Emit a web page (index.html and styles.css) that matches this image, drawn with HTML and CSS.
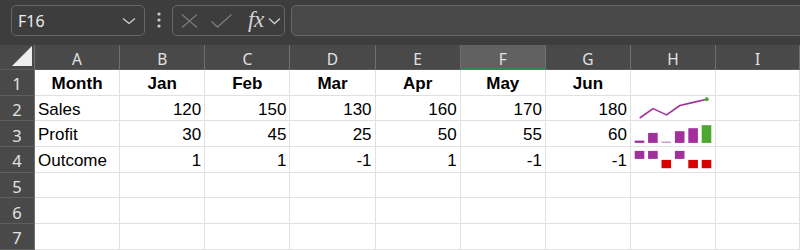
FILE: index.html
```html
<!DOCTYPE html>
<html lang="en">
<head>
  <meta charset="UTF-8" />
  <title>Sparklines</title>
  <link rel="stylesheet" href="styles.css">
</head>
<body>

  <!-- formula bar -->
  <div class="toolbar">
    <div class="namebox">
      <span>F16</span>
      <svg width="14" height="8" viewBox="0 0 14 8"><path d="M1 1.5 L7 6.5 L13 1.5" /></svg>
    </div>
    <div class="dots">
      <svg width="4" height="16" viewBox="0 0 4 16"><circle cx="2" cy="2" r="1.6"/><circle cx="2" cy="8" r="1.6"/><circle cx="2" cy="14" r="1.6"/></svg>
    </div>
    <div class="fnbox">
      <svg class="x-icon" width="17" height="14" viewBox="0 0 17 14"><path d="M1 0.5 L16 13.5 M16 0.5 L1 13.5" /></svg>
      <svg class="ok-icon" width="21" height="14" viewBox="0 0 21 14"><path d="M0.5 7.5 L6.5 13 L20.5 0.5" /></svg>
      <span class="fx">fx</span>
      <svg class="fx-arrow" width="13" height="8" viewBox="0 0 13 8"><path d="M1 1.5 L6.5 6.5 L12 1.5" /></svg>
    </div>
    <div class="formula"></div>
  </div>

  <!-- grid -->
  <div class="sheet">
    <div class="corner"><span class="tri"></span></div>
    <div class="hd">A</div>
    <div class="hd">B</div>
    <div class="hd">C</div>
    <div class="hd">D</div>
    <div class="hd">E</div>
    <div class="hd sel">F</div>
    <div class="hd">G</div>
    <div class="hd">H</div>
    <div class="hd">I</div>

    <div class="rh">1</div>
    <div class="c b">Month</div>
    <div class="c b">Jan</div>
    <div class="c b">Feb</div>
    <div class="c b">Mar</div>
    <div class="c b">Apr</div>
    <div class="c b">May</div>
    <div class="c b">Jun</div>
    <div class="c"></div>
    <div class="c"></div>

    <div class="rh">2</div>
    <div class="c">Sales</div>
    <div class="c num">120</div>
    <div class="c num">150</div>
    <div class="c num">130</div>
    <div class="c num">160</div>
    <div class="c num">170</div>
    <div class="c num">180</div>
    <div class="c spark">
      <svg width="85" height="25" viewBox="0 0 85 25">
        <polyline class="line" points="8.7,22 22.1,12.6 35.5,18.9 48.9,9.5 62.3,6.4 75.7,3.3" />
        <circle class="hi" cx="75.7" cy="3.3" r="2" />
      </svg>
    </div>
    <div class="c"></div>

    <div class="rh">3</div>
    <div class="c">Profit</div>
    <div class="c num">30</div>
    <div class="c num">45</div>
    <div class="c num">25</div>
    <div class="c num">50</div>
    <div class="c num">55</div>
    <div class="c num">60</div>
    <div class="c spark">
      <svg width="85" height="25" viewBox="0 0 85 25">
        <rect class="bar" x="3.7" y="19.6" width="9.6" height="2.3" />
        <rect class="bar" x="17.1" y="11.9" width="9.6" height="10" />
        <rect class="bar low" x="30.5" y="20.6" width="9.6" height="1.3" />
        <rect class="bar" x="43.9" y="10.2" width="9.6" height="11.7" />
        <rect class="bar" x="57.3" y="7.2" width="9.6" height="14.7" />
        <rect class="bar high" x="70.7" y="4.2" width="9.6" height="17.7" />
      </svg>
    </div>
    <div class="c"></div>

    <div class="rh">4</div>
    <div class="c">Outcome</div>
    <div class="c num">1</div>
    <div class="c num">1</div>
    <div class="c num">-1</div>
    <div class="c num">1</div>
    <div class="c num">-1</div>
    <div class="c num">-1</div>
    <div class="c spark">
      <svg width="85" height="25" viewBox="0 0 85 25">
        <rect class="bar" x="3.7" y="3.9" width="9.6" height="8" />
        <rect class="bar" x="17.1" y="3.9" width="9.6" height="8" />
        <rect class="bar loss" x="30.5" y="12.9" width="9.6" height="8.3" />
        <rect class="bar" x="43.9" y="3.9" width="9.6" height="8" />
        <rect class="bar loss" x="57.3" y="12.9" width="9.6" height="8.3" />
        <rect class="bar loss" x="70.7" y="12.9" width="9.6" height="8.3" />
      </svg>
    </div>
    <div class="c"></div>

    <div class="rh">5</div>
    <div class="c"></div><div class="c"></div><div class="c"></div><div class="c"></div><div class="c"></div>
    <div class="c"></div><div class="c"></div><div class="c"></div><div class="c"></div>

    <div class="rh">6</div>
    <div class="c"></div><div class="c"></div><div class="c"></div><div class="c"></div><div class="c"></div>
    <div class="c"></div><div class="c"></div><div class="c"></div><div class="c"></div>

    <div class="rh">7</div>
    <div class="c"></div><div class="c"></div><div class="c"></div><div class="c"></div><div class="c"></div>
    <div class="c"></div><div class="c"></div><div class="c"></div><div class="c"></div>
  </div>

</body>
</html>
```

FILE: styles.css
```css
body {
  margin: 0;
  background-color: #ffffff;
  font-family: "Liberation Sans", Arial, sans-serif;
  overflow: hidden;
}

/* formula bar */
.toolbar {
  display: flex;
  align-items: flex-start;
  height: 45px;
  padding: 5px 0 0 11px;
  box-sizing: border-box;
  background-color: #3d3d3d;
  overflow: hidden;
}

.namebox {
  display: flex;
  align-items: center;
  justify-content: space-between;
  width: 134px;
  height: 31px;
  padding: 0 8px 0 6px;
  box-sizing: border-box;
  border: 1px solid #676767;
  border-radius: 5px;
  color: #ececec;
  font-family: "Noto Sans", sans-serif;
  font-size: 16px;
}

.namebox svg path,
.fx-arrow path {
  fill: none;
  stroke: #cfcfcf;
  stroke-width: 1.3;
}

.dots {
  display: flex;
  justify-content: center;
  width: 27px;
  padding-top: 7px;
}

.dots circle {
  fill: #cfcfcf;
}

.fnbox {
  display: flex;
  align-items: center;
  width: 113px;
  height: 31px;
  padding-left: 8px;
  box-sizing: border-box;
  border: 1px solid #676767;
  border-radius: 5px;
}

.x-icon path,
.ok-icon path {
  fill: none;
  stroke: #7b7b7b;
  stroke-width: 1.3;
}

.ok-icon {
  margin-left: 13px;
}

.fx {
  margin-left: 16px;
  margin-top: -3px;
  color: #d4d4d4;
  font-family: "Liberation Serif", serif;
  font-style: italic;
  font-size: 23px;
  line-height: 1;
  letter-spacing: -0.5px;
}

.fx-arrow {
  margin-left: 4px;
}

.formula {
  flex: 1;
  height: 31px;
  margin-left: 6px;
  margin-right: -10px;
  box-sizing: border-box;
  border: 1px solid #676767;
  border-radius: 5px;
  background-color: #484848;
}

/* grid */
.sheet {
  display: grid;
  grid-template-columns: 35px repeat(8, 85.15px) 1fr;
  grid-template-rows: 25px repeat(7, 25.7px);
}

.corner,
.hd,
.rh {
  background-color: #494949;
  color: #e2e2e2;
  font-family: "Noto Sans", sans-serif;
  box-sizing: border-box;
}

.corner {
  display: flex;
  align-items: flex-end;
  justify-content: flex-end;
  padding: 0 2px 3px 0;
  border-right: 1px solid #6f6f6f;
  border-bottom: 1px solid #5a5a5a;
}

.tri {
  width: 0;
  height: 0;
  border-left: 20px solid transparent;
  border-bottom: 20px solid #ededed;
}

.hd {
  display: flex;
  justify-content: center;
  align-items: center;
  padding-top: 4px;
  font-size: 15.5px;
  border-right: 1px solid #6f6f6f;
  border-bottom: 1px solid #5a5a5a;
}

.hd.sel {
  background-color: #616161;
  border-bottom: 2px solid #2f8a55;
}

.rh {
  display: flex;
  justify-content: center;
  align-items: center;
  padding-top: 3px;
  font-size: 16.5px;
  border-right: 1px solid #6f6f6f;
  border-bottom: 1px solid #5f5f5f;
}

.c {
  display: flex;
  align-items: center;
  padding: 3px 3px 0 3px;
  box-sizing: border-box;
  font-size: 17px;
  color: #000;
  white-space: nowrap;
  border-right: 1px solid #e1e1e1;
  border-bottom: 1px solid #e1e1e1;
}

.c.b {
  justify-content: center;
  font-weight: bold;
}

.c.num {
  justify-content: flex-end;
}

.c.spark {
  padding: 0;
  align-items: flex-start;
}

.spark svg {
  display: block;
  overflow: visible;
}

.line {
  fill: none;
  stroke: #a1309d;
  stroke-width: 1.6;
  stroke-linejoin: round;
}

.hi {
  fill: #4ea72e;
}

.bar {
  fill: #a1309d;
}

.bar.low {
  fill: #cc8ac9;
}

.bar.high {
  fill: #4ea72e;
}

.bar.loss {
  fill: #d90000;
}
```
